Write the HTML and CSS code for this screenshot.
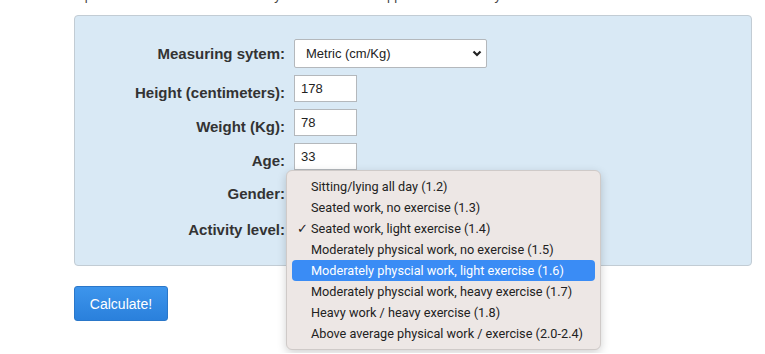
FILE: index.html
```html
<!DOCTYPE html>
<html lang="en">
<head>
    <meta charset="UTF-8">
    <meta name="viewport" content="width=device-width, initial-scale=1.0">
    <title>Calorie calculator</title>
    <link rel="stylesheet" href="styles.css">
</head>
<body>
<div class="page">
    <p class="intro">Input the details below and the daily calorie need to support all of the body's functions will be shown.</p>
    <form class="calc">
        <div class="panel">
            <div class="row">
                <label for="system">Measuring sytem:</label>
                <div class="select-wrap">
                    <select id="system">
                        <option>Metric (cm/Kg)</option>
                        <option>Imperial (in/lbs)</option>
                    </select>
                    <svg class="chevron" width="10" height="7" viewBox="0 0 10 7"><path d="M1.5 1.5 L5 5 L8.5 1.5" fill="none" stroke="#222" stroke-width="2.2"/></svg>
                </div>
            </div>
            <div class="row row-input">
                <label for="height">Height (centimeters):</label>
                <input type="text" id="height" value="178">
            </div>
            <div class="row row-input">
                <label for="weight">Weight (Kg):</label>
                <input type="text" id="weight" value="78">
            </div>
            <div class="row row-input">
                <label for="age">Age:</label>
                <input type="text" id="age" value="33">
            </div>
            <div class="row row-low">
                <label for="gender">Gender:</label>
                <div class="select-wrap">
                    <select id="gender">
                        <option>Male</option>
                        <option>Female</option>
                    </select>
                </div>
            </div>
            <div class="row row-low">
                <label for="activity">Activity level:</label>
                <div class="select-wrap">
                    <select id="activity">
                        <option>Seated work, light exercise (1.4)</option>
                    </select>
                </div>
            </div>
        </div>
        <button type="button" class="calc-button">Calculate!</button>
    </form>

    <!-- open popup of the activity select -->
    <ul class="menu">
        <li>Sitting/lying all day (1.2)</li>
        <li>Seated work, no exercise (1.3)</li>
        <li class="checked">Seated work, light exercise (1.4)</li>
        <li>Moderately physical work, no exercise (1.5)</li>
        <li class="active">Moderately physcial work, light exercise (1.6)</li>
        <li>Moderately physcial work, heavy exercise (1.7)</li>
        <li>Heavy work / heavy exercise (1.8)</li>
        <li>Above average physical work / exercise (2.0-2.4)</li>
    </ul>
</div>
</body>
</html>
```

FILE: styles.css
```css
:root {
    --panel-bg: #d9e9f5;
    --panel-border: #c2ccd4;
    --label-color: #333;
    --menu-bg: #ede7e5;
    --menu-active: #3a8cf5;
    --btn-top: #3d95ec;
    --btn-bottom: #2a80dc;
}
body { margin: 0; background: #fff; font-family: "Liberation Sans", Arial, sans-serif; color: #222; }
.page { position: relative; display: flow-root; padding: 0 0 32px 74px; width: 678px; }
.intro { margin: -12px 0 0; font-size: 13px; line-height: 15px; color: #444; white-space: nowrap; }
.panel {
    margin-top: 12px; background: var(--panel-bg); border: 1px solid var(--panel-border);
    border-radius: 4px; padding: 23px 0 23px; display: flex; flex-direction: column; gap: 7px;
}
.row { display: flex; align-items: center; }
.row label { width: 210px; margin-right: 9px; text-align: right; font-weight: 700; font-size: 15px; color: var(--label-color); }
.row-input label { padding-top: 8px; }
.row-low label { padding-top: 4px; }
.select-wrap { position: relative; width: 193px; }
select {
    appearance: none; -webkit-appearance: none; width: 100%; height: 29px; padding: 0 11px;
    border: 1px solid #b4b8bc; border-radius: 2px; background: #fff; font-family: inherit;
    font-size: 13px; color: #222; margin: 0;
}
.chevron { position: absolute; right: 5px; top: 11px; pointer-events: none; }
input {
    width: 63px; height: 27px; box-sizing: border-box; padding: 0 6px; border: 1px solid #b4b8bc;
    background: #fff; font-family: inherit; font-size: 13px; color: #222; margin: 0;
}
.calc-button {
    margin-top: 20px; width: 94px; height: 35px; border: 1px solid #2a77c9; border-radius: 3px;
    background: linear-gradient(var(--btn-top), var(--btn-bottom)); color: #fff;
    font-family: "Liberation Sans", Arial, sans-serif; font-size: 14px; cursor: pointer;
}
.menu {
    position: absolute; left: 286px; top: 170px; margin: 0; padding: 5px 0; list-style: none;
    width: 313px; background: var(--menu-bg); border: 1px solid #cfcac8; border-radius: 6px;
    box-shadow: 0 3px 10px rgba(0, 0, 0, 0.18); font-family: Roboto, "Noto Sans", sans-serif;
    font-size: 12.7px; color: #222;
}
.menu li { position: relative; margin: 0 5px; padding-left: 19px; height: 21px; line-height: 21px; border-radius: 4px; white-space: nowrap; }
.menu li.checked::before { content: "\2713"; position: absolute; left: 5px; font-size: 13px; }
.menu li.active { background: var(--menu-active); color: #fff; }
```
